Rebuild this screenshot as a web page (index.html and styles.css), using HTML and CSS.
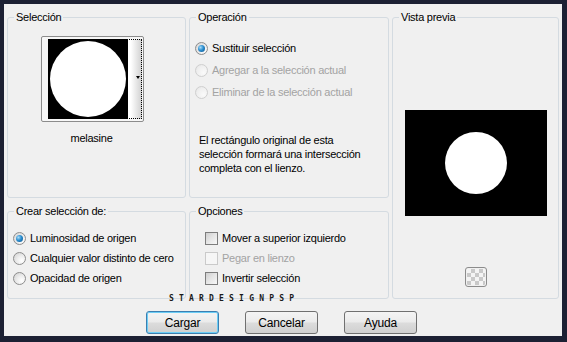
FILE: index.html
```html
<!DOCTYPE html>
<html lang="es">
<head>
    <meta charset="UTF-8">
    <title>Cargar selección desde disco</title>
    <link rel="stylesheet" href="styles.css">
</head>
<body>
    <div class="dialog">
        <div class="groups">
            <!-- Selección -->
            <fieldset class="group">
                <legend>Selección</legend>
                <div class="thumb-wrap">
                    <div class="thumb">
                        <div class="thumb-focus">
                            <div class="thumb-img"><div class="thumb-circle"></div></div>
                            <div class="thumb-strip"><span class="thumb-arrow"></span></div>
                        </div>
                    </div>
                    <div class="thumb-name">melasine</div>
                </div>
            </fieldset>

            <!-- Operación -->
            <fieldset class="group">
                <legend>Operación</legend>
                <div class="op-list">
                    <label class="opt"><span class="radio checked"></span>Sustituir selección</label>
                    <label class="opt disabled"><span class="radio"></span>Agregar a la selección actual</label>
                    <label class="opt disabled"><span class="radio"></span>Eliminar de la selección actual</label>
                </div>
                <p class="note">El rectángulo original de esta<br>selección formará una intersección<br>completa con el lienzo.</p>
            </fieldset>

            <!-- Vista previa -->
            <fieldset class="group preview">
                <legend>Vista previa</legend>
                <div class="preview-img"><div class="preview-circle"></div></div>
                <span class="checker"></span>
            </fieldset>

            <!-- Crear selección de -->
            <fieldset class="group">
                <legend>Crear selección de:</legend>
                <div class="small-list">
                    <label class="opt short"><span class="radio checked"></span>Luminosidad de origen</label>
                    <label class="opt short"><span class="radio"></span>Cualquier valor distinto de cero</label>
                    <label class="opt short"><span class="radio"></span>Opacidad de origen</label>
                </div>
            </fieldset>

            <!-- Opciones -->
            <fieldset class="group">
                <legend>Opciones</legend>
                <div class="small-list checks">
                    <label class="opt short"><span class="check"></span>Mover a superior izquierdo</label>
                    <label class="opt short disabled"><span class="check"></span>Pegar en lienzo</label>
                    <label class="opt short"><span class="check"></span>Invertir selección</label>
                </div>
            </fieldset>
        </div>

        <div class="watermark">STARDESIGNPSP</div>

        <div class="buttons">
            <button class="btn focused">Cargar</button>
            <button class="btn">Cancelar</button>
            <button class="btn">Ayuda</button>
        </div>
    </div>
</body>
</html>
```

FILE: styles.css
```css
/* window frame */
body {
    margin: 0;
    padding: 0;
    background-color: #1c2033;
    font-family: "Liberation Sans", Arial, sans-serif;
    font-size: 11px;
    letter-spacing: -0.25px;
    color: #000;
}

.dialog {
    position: relative;
    margin: 4px 5px 0 4px;
    height: 332px;
    background-color: #f0f0f0;
}

/* group boxes */
.groups {
    display: grid;
    grid-template-columns: 179px 200px 167px;
    grid-template-rows: 187px 94px;
    column-gap: 3px;
    row-gap: 7px;
    padding: 7px 3px 0 3px;
}

.group {
    margin: 0;
    padding: 0;
    min-width: 0;
    border: 1px solid #d4dbe1;
    border-radius: 3px;
}

.group legend {
    margin-left: 6px;
    padding: 0 2px;
    line-height: 13px;
}

.preview {
    grid-column: 3;
    grid-row: 1 / 3;
    display: flex;
    flex-direction: column;
    align-items: center;
}

/* selection thumbnail */
.thumb-wrap {
    width: 103px;
    margin: 12px 0 0 33px;
}

.thumb {
    border: 1px solid #8c8c8c;
    border-radius: 2px;
    padding: 2px 1px 2px 6px;
    background-color: #f7f7f7;
}

.thumb-focus {
    display: flex;
    outline: 1px dotted #000;
    outline-offset: -1px;
}

.thumb-img {
    width: 80px;
    height: 80px;
    background-color: #000;
    display: flex;
    align-items: center;
    justify-content: center;
}

.thumb-circle {
    width: 76px;
    height: 76px;
    border-radius: 50%;
    background-color: #fff;
}

.thumb-strip {
    flex: 1;
    display: flex;
    align-items: center;
    justify-content: flex-end;
    padding-right: 2px;
    background: linear-gradient(to right, #ffffff 20%, #cfcfcf);
}

.thumb-arrow {
    width: 0;
    height: 0;
    margin-top: -3px;
    border-left: 2px solid transparent;
    border-right: 2px solid transparent;
    border-top: 3px solid #000;
}

.thumb-name {
    margin-top: 10px;
    line-height: 13px;
    text-align: center;
    padding-right: 2px;
}

/* radio / check rows */
.op-list {
    margin-top: 13px;
    padding-left: 5px;
}

.opt {
    display: flex;
    align-items: center;
    gap: 4px;
    height: 22px;
}

.opt.short {
    height: 20px;
}

.opt.disabled {
    color: #a3a3a3;
}

.small-list {
    margin-top: 10px;
    padding-left: 5px;
}

.small-list.checks {
    padding-left: 15px;
}

.small-list.checks .opt {
    gap: 2px;
}

.radio {
    position: relative;
    flex: none;
    width: 11px;
    height: 11px;
    border: 1px solid #8d8d8d;
    border-radius: 50%;
    background: radial-gradient(circle at 70% 70%, #ffffff 0%, #ececec 45%, #cfcfcf 100%);
}

.opt.disabled .radio {
    border-color: #cfcfcf;
    background: radial-gradient(circle at 70% 70%, #fafafa 0%, #efefef 60%, #e2e2e2 100%);
}

.radio.checked::after {
    content: "";
    position: absolute;
    left: 2px;
    top: 2px;
    width: 7px;
    height: 7px;
    border-radius: 50%;
    background: radial-gradient(circle at 35% 35%, #a9dcf7 0%, #2b8ed0 45%, #0b4f86 100%);
}

.check {
    flex: none;
    width: 11px;
    height: 11px;
    border: 1px solid #7d7d7d;
    background: linear-gradient(135deg, #cfcfcf 0%, #e6e6e6 50%, #f7f7f7 100%);
    margin-right: 2px;
}

.opt.disabled .check {
    border-color: #cacaca;
    background: #f6f6f6;
}

.note {
    margin: 30px 0 0 9px;
    line-height: 14px;
}

/* preview */
.preview-img {
    width: 142px;
    height: 106px;
    margin-top: 86px;
    background-color: #000;
    display: flex;
    align-items: center;
    justify-content: center;
}

.preview-circle {
    width: 62px;
    height: 62px;
    border-radius: 50%;
    background-color: #fff;
}

.checker {
    width: 18px;
    height: 16px;
    margin-top: 51px;
    border: 1px solid #8c8c8c;
    border-radius: 3px;
    padding: 1px;
    background-color: #fff;
    background-image: conic-gradient(#c9c9c9 25%, #f4f4f4 0 50%, #c9c9c9 0 75%, #f4f4f4 0);
    background-size: 8px 8px;
    background-origin: content-box;
    background-clip: content-box;
}

/* watermark over the bottom border */
.watermark {
    position: absolute;
    left: 165px;
    top: 291px;
    font-family: "DejaVu Sans Mono", monospace;
    font-weight: bold;
    font-size: 8px;
    line-height: 8px;
    letter-spacing: 5.2px;
    color: #1a1a1a;
}

/* buttons */
.buttons {
    display: flex;
    justify-content: center;
    gap: 26px;
    margin-top: 12px;
    padding-right: 3px;
}

.btn {
    width: 73px;
    height: 23px;
    padding: 0;
    font-family: "Liberation Sans", Arial, sans-serif;
    font-size: 12px;
    letter-spacing: -0.2px;
    color: #000;
    border: 1px solid #707070;
    border-radius: 3px;
    background: linear-gradient(to bottom, #f4f4f4 0%, #ebebeb 48%, #dcdcdc 52%, #d0d0d0 100%);
}

.btn.focused {
    border-color: #3c7fb1;
    box-shadow: inset 0 0 0 1px #6ccdf5;
}
```
